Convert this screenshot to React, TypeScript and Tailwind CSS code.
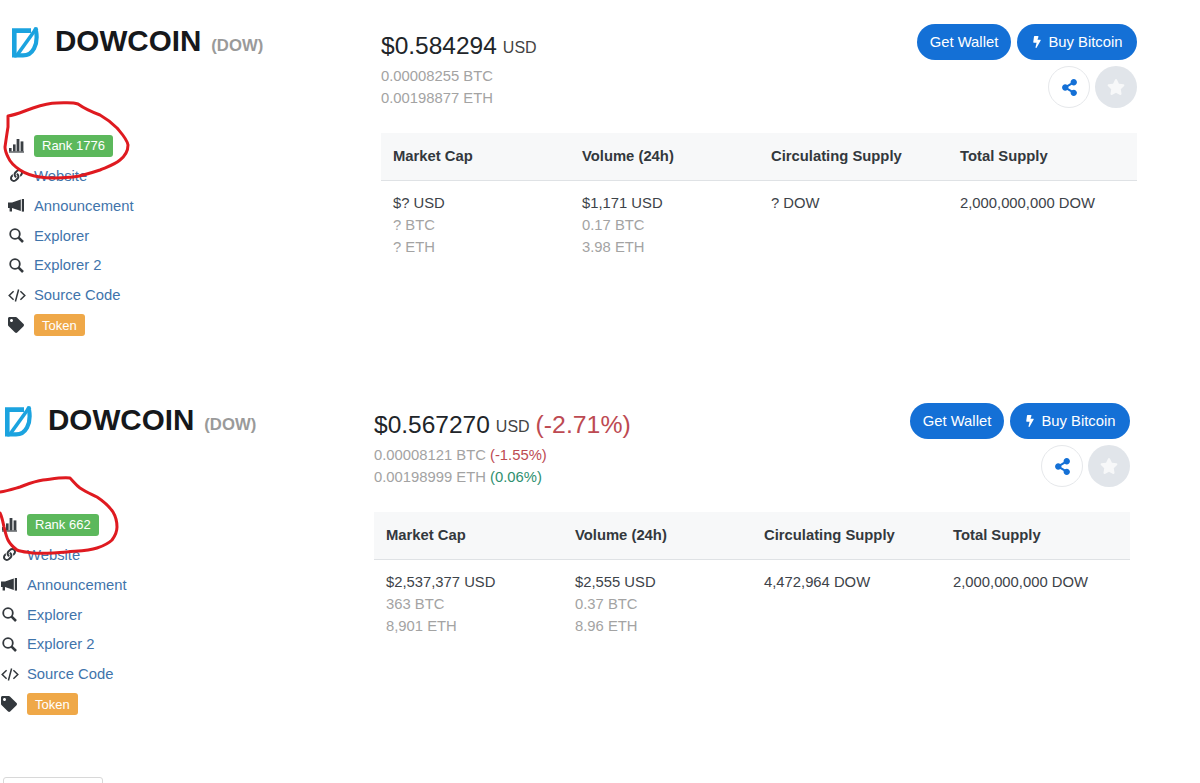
import { FaBolt, FaLink, FaShareAlt, FaStar, FaTag } from "react-icons/fa";

type Cell = { main: string; btc?: string; eth?: string };

type Coin = {
  rank: string;
  price: string;
  change?: string;
  btc: string;
  btcChange?: string;
  eth: string;
  ethChange?: string;
  cells: Cell[];
};

const FIRST: Coin = {
  rank: "Rank 1776",
  price: "$0.584294",
  btc: "0.00008255 BTC",
  eth: "0.00198877 ETH",
  cells: [
    { main: "$? USD", btc: "? BTC", eth: "? ETH" },
    { main: "$1,171 USD", btc: "0.17 BTC", eth: "3.98 ETH" },
    { main: "? DOW" },
    { main: "2,000,000,000 DOW" },
  ],
};

const SECOND: Coin = {
  rank: "Rank 662",
  price: "$0.567270",
  change: "(-2.71%)",
  btc: "0.00008121 BTC",
  btcChange: "(-1.55%)",
  eth: "0.00198999 ETH",
  ethChange: "(0.06%)",
  cells: [
    { main: "$2,537,377 USD", btc: "363 BTC", eth: "8,901 ETH" },
    { main: "$2,555 USD", btc: "0.37 BTC", eth: "8.96 ETH" },
    { main: "4,472,964 DOW" },
    { main: "2,000,000,000 DOW" },
  ],
};

const HEADERS = ["Market Cap", "Volume (24h)", "Circulating Supply", "Total Supply"];

function Logo() {
  return (
    <svg width="28" height="31" viewBox="0 0 28 31" fill="none" className="shrink-0">
      <path d="M3.3 30.5V3.6H20" stroke="#1ba3df" strokeWidth="4.6" />
      <path d="M25 3.5C27.6 18 21.5 28.4 12 28.4H3.3" stroke="#1ba3df" strokeWidth="4.2" />
      <path d="M6.5 27.5L24.5 2.5" stroke="#1ba3df" strokeWidth="3.6" />
      <circle cx="24.8" cy="2.4" r="2.3" fill="#1ba3df" />
    </svg>
  );
}

function BarsIcon() {
  return (
    <svg width="15" height="15" viewBox="0 0 15 15" fill="#3a3f44" className="ml-[2px]">
      <rect x="0" y="13.4" width="15" height="1.2" />
      <rect x="0" y="10" width="2.6" height="3.4" />
      <rect x="4" y="6.4" width="2.6" height="7" />
      <rect x="7.6" y="1" width="2.8" height="12.4" />
      <rect x="11.6" y="3.4" width="2.8" height="10" />
    </svg>
  );
}

function HornIcon() {
  return (
    <svg width="16" height="13" viewBox="0 0 16 13" fill="#33383d" className="ml-px">
      <path d="M0 3.5H4L12.8 0.5V12L4 9V12.6H1.6V9H0Z" />
      <rect x="13.8" y="0" width="2.2" height="12.6" />
    </svg>
  );
}

function SearchIcon() {
  return (
    <svg width="15" height="15" viewBox="0 0 15 15" fill="none" stroke="#33383d" className="ml-[2px]">
      <circle cx="6" cy="6" r="4.8" strokeWidth="1.8" />
      <path d="M9.6 9.6L14 14" strokeWidth="2.6" />
    </svg>
  );
}

function CodeIcon() {
  return (
    <svg width="18" height="13" viewBox="0 0 18 13" fill="none" stroke="#33383d" strokeWidth="1.5" className="ml-px">
      <path d="M5.6 2.2L1.2 6.5L5.6 10.8" />
      <path d="M10.6 0.5L7.4 12.5" />
      <path d="M12.4 2.2L16.8 6.5L12.4 10.8" />
    </svg>
  );
}

function SideRow({ icon, children }: { icon: React.ReactNode; children: React.ReactNode }) {
  return (
    <div className="flex h-[29.9px] items-center">
      <div className="flex w-[27px] items-center justify-start text-[#33383d]">{icon}</div>
      {children}
    </div>
  );
}

function SideLink({ label }: { label: string }) {
  return <span className="text-[#3f74ab]">{label}</span>;
}

function CoinSection({ coin, className }: { coin: Coin; className: string }) {
  return (
    <section className={`flex h-[379px] w-[1130px] pt-6 ${className}`}>
      <div className="w-[374px] shrink-0">
        <div className="flex h-9 items-center">
          <div className="ml-[4px] w-[44px]">
            <Logo />
          </div>
          <h1 className="mb-0.5 text-[29.6px] font-bold leading-none text-[#16181b]">DOWCOIN</h1>
          <span className="ml-[10px] mt-2 text-[16.7px] font-bold text-[#9a9a9a]">(DOW)</span>
        </div>

        <div className="mt-[71px]">
          <SideRow icon={<BarsIcon />}>
            <span className="flex h-[22px] items-center rounded-[3px] bg-[#5cb85c] px-2 text-[13px] text-white">
              {coin.rank}
            </span>
          </SideRow>
          <SideRow icon={<FaLink size={13} className="ml-[3px]" />}>
            <SideLink label="Website" />
          </SideRow>
          <SideRow icon={<HornIcon />}>
            <SideLink label="Announcement" />
          </SideRow>
          <SideRow icon={<SearchIcon />}>
            <SideLink label="Explorer" />
          </SideRow>
          <SideRow icon={<SearchIcon />}>
            <SideLink label="Explorer 2" />
          </SideRow>
          <SideRow icon={<CodeIcon />}>
            <SideLink label="Source Code" />
          </SideRow>
          <SideRow icon={<FaTag size={16} className="ml-px" />}>
            <span className="flex h-[22px] items-center rounded-[3px] bg-[#efa848] px-2 text-[13px] text-white">
              Token
            </span>
          </SideRow>
        </div>
      </div>

      <div className="w-[756px] shrink-0">
        <div className="flex h-[109px] justify-between">
          <div>
            <div className="flex h-11 items-center text-[#212529]">
              <span className="text-[24.5px]">{coin.price}</span>
              <span className="ml-[6px] mt-1 text-base text-[#444]">USD</span>
              {coin.change && <span className="ml-[6px] text-[24.8px] text-[#bd4a52]">{coin.change}</span>}
            </div>
            <div className="mt-[-3px] leading-[22px] text-[#a3a3a3]">
              <div>
                {coin.btc} {coin.btcChange && <span className="text-[#bd4a52]">{coin.btcChange}</span>}
              </div>
              <div>
                {coin.eth} {coin.ethChange && <span className="text-[#2f8f6f]">{coin.ethChange}</span>}
              </div>
            </div>
          </div>

          <div className="flex flex-col items-end">
            <div className="flex gap-[6px]">
              <button className="flex h-[36px] w-[94px] items-center justify-center rounded-full bg-[#1470d6] text-white">
                Get Wallet
              </button>
              <button className="flex h-[36px] w-[120px] items-center justify-center gap-[5px] rounded-full bg-[#1470d6] text-white">
                <FaBolt size={12} />
                Buy Bitcoin
              </button>
            </div>
            <div className="mt-[6px] flex gap-[5px]">
              <button className="flex size-[42px] items-center justify-center rounded-full border border-[#e6e8eb] bg-white text-[#1470d6]">
                <FaShareAlt size={17} />
              </button>
              <button className="flex size-[42px] items-center justify-center rounded-full bg-[#e1e5ea] text-[#f7f8f9]">
                <FaStar size={18} />
              </button>
            </div>
          </div>
        </div>

        <div className="grid h-[48px] grid-cols-[189px_189px_189px_189px] items-center border-b border-[#dfe2e5] bg-[#f7f8f9] pl-3 font-bold text-[#33383d]">
          {HEADERS.map((h) => (
            <div key={h}>{h}</div>
          ))}
        </div>

        <div className="grid grid-cols-[189px_189px_189px_189px] pl-3 pt-[11px] leading-[22px]">
          {coin.cells.map((c) => (
            <div key={c.main}>
              <div className="text-[#3d4349]">{c.main}</div>
              {c.btc && <div className="text-[#a3a3a3]">{c.btc}</div>}
              {c.eth && <div className="text-[#a3a3a3]">{c.eth}</div>}
            </div>
          ))}
        </div>
      </div>
    </section>
  );
}

export default function App() {
  return (
    <div className="relative h-[783px] w-[1200px] overflow-hidden bg-white font-['Liberation_Sans',Arial,sans-serif] text-[14.8px]">
      <CoinSection coin={FIRST} className="ml-[7px]" />
      <CoinSection coin={SECOND} className="" />
      <div className="ml-[3px] mt-[19px] h-8 w-[100px] rounded-[3px] border border-[#d8d8d8]" />

      {/* hand drawn circles on top of the screenshot */}
      <svg width="1200" height="783" className="pointer-events-none absolute left-0 top-0" fill="none" stroke="#df1a20" strokeWidth="3" strokeLinecap="round" strokeLinejoin="round">
        <path d="M8 116C16 115 24 111 33 108C42 105 48 103 57 103C66 103 72 102 78 104C85 109 92 112 100 115C107 119 112 123 117 128C122 134 127 139 128 145C128 151 125 156 120 160C114 165 107 167 100 170C91 173 82 176 73 177C62 178 50 179 40 177C32 176 26 174 20 170C14 166 10 162 8 157C6 153 5 150 5 147C6 140 7 133 8 127L8 116" />
        <path d="M0 492C7 491 13 489 20 487C28 484 35 481 43 480C52 479 62 477 70 478C74 482 76 485 80 488C86 492 91 494 97 497C103 501 109 506 113 512C116 517 117 522 117 527C117 532 115 536 112 540C108 544 103 546 97 548C88 551 77 551 67 552C56 553 44 554 33 553C27 552 22 552 17 550C13 547 10 544 8 540C6 536 5 531 4 527C3 522 2 517 0 513" />
      </svg>
    </div>
  );
}
